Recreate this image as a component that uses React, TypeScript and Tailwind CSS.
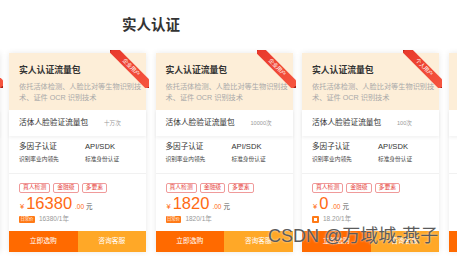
import React from "react";

interface Plan {
  ribbon: string;
  quota: string;
  price: string;
  daily: string;
  badge: string;
}

const PLANS: Plan[] = [
  { ribbon: "企业用户", quota: "十万次", price: "99800", daily: "99800/1年", badge: "日常价" },
  { ribbon: "企业用户", quota: "十万次", price: "16380", daily: "16380/1年", badge: "日常价" },
  { ribbon: "企业用户", quota: "10000次", price: "1820", daily: "1820/1年", badge: "日常价" },
  { ribbon: "个人用户", quota: "100次", price: "0", daily: "18.20/1年", badge: "" },
  { ribbon: "企业用户", quota: "十万次", price: "16380", daily: "16380/1年", badge: "日常价" },
];

const FONT = { fontFamily: "'Liberation Sans', 'Noto Sans CJK SC', sans-serif" };

function Ribbon({ text }: { text: string }) {
  return (
    <>
      {/* folded ends under the band */}
      <div className="absolute left-[101px] top-[-3px] h-[3px] w-[4px] bg-[#a5241a]" />
      <div className="absolute right-[-3px] top-[31px] h-[4px] w-[3px] bg-[#a5241a]" />
      <div className="absolute left-[101px] top-[-3px] h-[38px] w-[39px] overflow-hidden">
        <div className="absolute left-[-5.5px] top-[13px] flex h-[9px] w-[52px] rotate-45 items-center justify-center bg-gradient-to-r from-[#e8382c] to-[#f6553f] text-[5.5px] leading-none text-white">
          {text}
        </div>
      </div>
    </>
  );
}

function Card({ plan }: { plan: Plan }) {
  return (
    <div className="relative flex w-[137px] flex-none flex-col bg-white shadow-[0_0_6px_rgba(0,0,0,0.09)]">
      <div className="h-[57px] bg-[#fdeed8] pl-[10px] pt-[11px]">
        <div className="text-[8.8px] font-bold leading-[12px] text-[#333]">实人认证流量包</div>
        <div className="mt-[5px] whitespace-nowrap text-[7.2px] leading-[11px] text-[#a9a9a9]">
          <div>依托活体检测、人脸比对等生物识别技</div>
          <div>术、证件 OCR 识别技术</div>
        </div>
      </div>
      <div className="relative flex h-[26px] items-center px-[10px] shadow-[0_2px_3px_rgba(0,0,0,0.05)]">
        <span className="w-[85px] text-[7.7px] text-[#333]">活体人脸验证流量包</span>
        <span className="text-[5.6px] text-[#999]">{plan.quota}</span>
      </div>
      <div className="grid h-[38px] grid-cols-[66px_1fr] border-b border-[#f1f1f1] px-[10px] pt-[5px]">
        <div>
          <div className="text-[7.6px] leading-[12px] text-[#333]">多因子认证</div>
          <div className="mt-[1px] text-[5.7px] leading-[10px] text-[#444]">识别率业内领先</div>
        </div>
        <div>
          <div className="text-[7.6px] leading-[12px] text-[#333]">API/SDK</div>
          <div className="mt-[1px] text-[5.7px] leading-[10px] text-[#444]">标准身份认证</div>
        </div>
      </div>
      <div className="flex gap-[3px] px-[10px] pt-[9px]">
        {["真人检测", "金融级", "多要素"].map((t) => (
          <span
            key={t}
            className="flex h-[10px] items-center rounded-[2px] border border-[#f09a9a] px-[3px] text-[5.8px] leading-none text-[#e6453d]"
          >
            {t}
          </span>
        ))}
      </div>
      <div className="flex h-[19px] items-baseline px-[11px] pt-[1px] text-[#ff6a13]">
        <span className="mr-[2px] text-[7.5px]">¥</span>
        <span className="text-[16.5px] leading-[19px]">{plan.price}</span>
        <span className="ml-[3px] text-[6.5px]">.00</span>
        <span className="ml-[2px] text-[6.5px] text-[#555]">元</span>
      </div>
      <div className="mt-[3px] flex h-[8px] items-center gap-[4px] px-[10px]">
        {plan.badge ? (
          <span className="flex h-[7px] items-center rounded-[1px] bg-[#ff7a17] px-[1.5px] text-[4.3px] leading-none text-white">
            {plan.badge}
          </span>
        ) : (
          <span className="flex h-[7px] w-[7px] items-center justify-center rounded-[1px] bg-[#ff7a17]">
            <span className="h-[3px] w-[3px] bg-white" />
          </span>
        )}
        <span className="text-[6.5px] text-[#999]">{plan.daily}</span>
      </div>
      <div className="mt-[8px] grid h-[21px] grid-cols-2 text-[6.8px] text-white">
        <div className="flex items-center justify-center bg-[#ff6a00]">立即选购</div>
        <div className="flex items-center justify-center bg-[#ffa827]">咨询客服</div>
      </div>
      <Ribbon text={plan.ribbon} />
    </div>
  );
}

export default function App() {
  return (
    <div className="relative h-[256px] w-[457px] overflow-hidden bg-white" style={FONT}>
      <div className="pl-[122px] pt-[15px] text-[14.5px] font-bold leading-[20px] text-[#333]">实人认证</div>
      <div className="ml-[-137.5px] mt-[18px] flex gap-[9.5px]">
        {PLANS.map((p, i) => (
          <Card key={i} plan={p} />
        ))}
      </div>
      <div className="absolute left-[268px] top-[225px] text-[18px] leading-[22px] text-[#5b5b5b] [text-shadow:0_0_2px_rgba(255,255,255,0.8)]">
        CSDN @万域城-燕子
      </div>
    </div>
  );
}
